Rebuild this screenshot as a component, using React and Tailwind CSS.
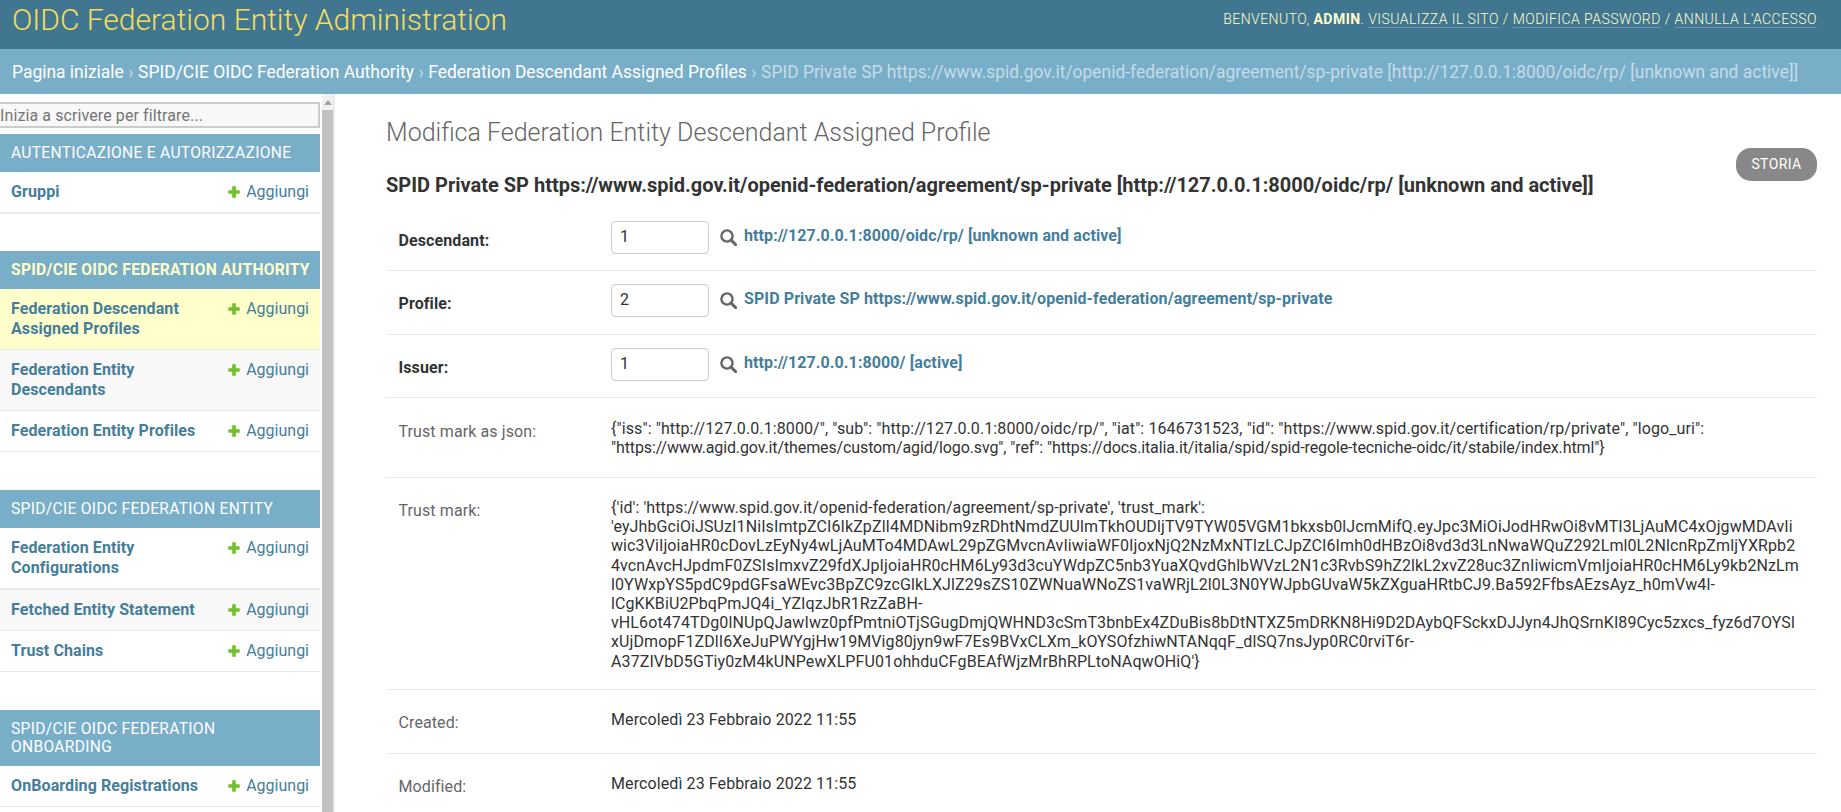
import React from "react";

const sections = [
  { title: "AUTENTICAZIONE E AUTORIZZAZIONE", mb: "mb-[37px]", rows: [{ n: ["Gruppi"], h: "h-[42px] border-b-2" }] },
  {
    title: "SPID/CIE OIDC FEDERATION AUTHORITY",
    active: true,
    mb: "mb-[38px]",
    rows: [
      { n: ["Federation Descendant", "Assigned Profiles"], h: "h-[61px] border-b", bg: "bg-[#ffffcc]" },
      { n: ["Federation Entity", "Descendants"], h: "h-[61px] border-b", bg: "bg-[#f8f8f8]" },
      { n: ["Federation Entity Profiles"], h: "h-[41px] border-b" },
    ],
  },
  {
    title: "SPID/CIE OIDC FEDERATION ENTITY",
    mb: "mb-[38px]",
    rows: [
      { n: ["Federation Entity", "Configurations"], h: "h-[62px] border-b-2" },
      { n: ["Fetched Entity Statement"], h: "h-[41px] border-b", bg: "bg-[#f8f8f8]" },
      { n: ["Trust Chains"], h: "h-[41px] border-b" },
    ],
  },
  {
    title: "SPID/CIE OIDC FEDERATION ONBOARDING",
    mb: "mb-[37px]",
    rows: [{ n: ["OnBoarding Registrations"], h: "h-[41px] border-b" }],
  },
];

const trustLines = [
  "{'id': 'https://www.spid.gov.it/openid-federation/agreement/sp-private', 'trust_mark':",
  "'eyJhbGciOiJSUzI1NiIsImtpZCI6IkZpZlI4MDNibm9zRDhtNmdZUUlmTkhOUDljTV9TYW05VGM1bkxsb0lJcmMifQ.eyJpc3MiOiJodHRwOi8vMTI3LjAuMC4xOjgwMDAvIi",
  "wic3ViIjoiaHR0cDovLzEyNy4wLjAuMTo4MDAwL29pZGMvcnAvIiwiaWF0IjoxNjQ2NzMxNTIzLCJpZCI6Imh0dHBzOi8vd3d3LnNwaWQuZ292Lml0L2NlcnRpZmljYXRpb2",
  "4vcnAvcHJpdmF0ZSIsImxvZ29fdXJpIjoiaHR0cHM6Ly93d3cuYWdpZC5nb3YuaXQvdGhlbWVzL2N1c3RvbS9hZ2lkL2xvZ28uc3ZnIiwicmVmIjoiaHR0cHM6Ly9kb2NzLm",
  "l0YWxpYS5pdC9pdGFsaWEvc3BpZC9zcGlkLXJlZ29sZS10ZWNuaWNoZS1vaWRjL2l0L3N0YWJpbGUvaW5kZXguaHRtbCJ9.Ba592FfbsAEzsAyz_h0mVw4l-",
  "lCgKKBiU2PbqPmJQ4i_YZIqzJbR1RzZaBH-",
  "vHL6ot474TDg0lNUpQJawIwz0pfPmtniOTjSGugDmjQWHND3cSmT3bnbEx4ZDuBis8bDtNTXZ5mDRKN8Hi9D2DAybQFSckxDJJyn4JhQSrnKI89Cyc5zxcs_fyz6d7OYSl",
  "xUjDmopF1ZDlI6XeJuPWYgjHw19MVig80jyn9wF7Es9BVxCLXm_kOYSOfzhiwNTANqqF_dlSQ7nsJyp0RC0rviT6r-",
  "A37ZIVbD5GTiy0zM4kUNPewXLPFU01ohhduCFgBEAfWjzMrBhRPLtoNAqwOHiQ'}",
];

const jsonLines = [
  '{"iss": "http://127.0.0.1:8000/", "sub": "http://127.0.0.1:8000/oidc/rp/", "iat": 1646731523, "id": "https://www.spid.gov.it/certification/rp/private", "logo_uri":',
  <span className="tracking-[-0.12px]">
    {'"https://www.agid.gov.it/themes/custom/agid/logo.svg", "ref": "https://docs.italia.it/italia/spid/spid-regole-tecniche-oidc/it/stabile/index.html"}'}
  </span>,
];

function Plus() {
  return (
    <svg viewBox="0 0 12 12" className="w-[12px] h-[12px] shrink-0 mt-[4px]">
      <path d="M4.2 0.3h3.6v3.9h3.9v3.6H7.8v3.9H4.2V7.8H0.3V4.2h3.9z" fill="#70bf2b" />
    </svg>
  );
}

function Search() {
  return (
    <svg viewBox="0 0 17 17" className="w-[17px] h-[17px] shrink-0 block" fill="none">
      <circle cx="7" cy="7" r="5.6" stroke="#666666" strokeWidth="2.4" />
      <path d="M11 11L15.6 15.6" stroke="#666666" strokeWidth="3" strokeLinecap="round" />
    </svg>
  );
}

function FkRow({ label, value, text, h }) {
  return (
    <div className={`flex items-center border-b border-[#eaeaea] ${h}`}>
      <div className="w-[225px] pl-[12.5px] pt-[7px] font-bold text-[#333333] shrink-0">{label}</div>
      <div className="flex items-center min-w-0">
        <div className="w-[98px] h-[33px] border border-[#cccccc] rounded-[4px] bg-white px-[8px] flex items-center text-[#333333] shrink-0">
          {value}
        </div>
        <span className="ml-[11px]"><Search /></span>
        <span className="ml-[7px] font-bold text-[#447e9b] whitespace-nowrap -mt-[3px]">{text}</span>
      </div>
    </div>
  );
}

function ReadRow({ label, lines, h, pt = "pt-[20px]" }) {
  return (
    <div className={`flex items-start border-b border-[#eaeaea] ${pt} ${h}`}>
      <div className="w-[225px] pl-[12.5px] pt-[3px] text-[#666666] shrink-0">{label}</div>
      <div className="text-[#333333] whitespace-nowrap">
        {lines.map((l, i) => (
          <div key={i}>{l}</div>
        ))}
      </div>
    </div>
  );
}

export default function App() {
  return (
    <div className="h-[812px] w-[1841px] overflow-hidden flex flex-col bg-white font-['Roboto',sans-serif] text-[16px] tracking-[0.1px] leading-[19.2px] text-[#333333]">
      <header className="h-[49px] shrink-0 bg-[#417690] flex items-center justify-between pl-[12px] pr-[24px]">
        <div className="text-[30px] tracking-normal leading-[38px] font-light text-[#f5dd5d] -mt-[9px] whitespace-nowrap">
          OIDC Federation Entity Administration
        </div>
        <div className="text-[14px] leading-[16px] font-light tracking-[0.45px] text-[#ffffcc] whitespace-nowrap -mt-[12px]">
          BENVENUTO, <strong className="font-bold">ADMIN</strong>.{" "}
          <a className="border-b border-white/25 text-[#ffffcc]">VISUALIZZA IL SITO</a> /{" "}
          <a className="border-b border-white/25 text-[#ffffcc]">MODIFICA PASSWORD</a> /{" "}
          <a className="border-b border-white/25 text-[#ffffcc]">ANNULLA L'ACCESSO</a>
        </div>
      </header>

      <nav className="h-[45px] shrink-0 bg-[#79aec8] flex items-center pl-[12px] pt-[2px] text-[17.46px] tracking-normal text-white whitespace-nowrap font-normal overflow-hidden">
        <span>Pagina iniziale</span>
        <span className="text-[#c4dce8] mx-[4.5px]">›</span>
        <span>SPID/CIE OIDC Federation Authority</span>
        <span className="text-[#c4dce8] mx-[4.5px]">›</span>
        <span>Federation Descendant Assigned Profiles</span>
        <span className="text-[#c4dce8] mx-[4.5px]">›</span>
        <span className="text-[#c4dce8]">
          SPID Private SP https://www.spid.gov.it/openid-federation/agreement/sp-private [http://127.0.0.1:8000/oidc/rp/ [unknown and active]]
        </span>
      </nav>

      <div className="flex flex-1 min-h-0">
        <aside className="w-[320px] shrink-0 overflow-hidden pt-[8px]">
          <input
            readOnly
            placeholder="Inizia a scrivere per filtrare..."
            className="block w-[320px] h-[26px] bg-[#f8f8f8] border-2 border-l-0 border-[#cccccc] pl-0 text-[16px] tracking-[0.1px] placeholder:text-[#757575] outline-none"
          />
          <div className="mt-[6px]">
            {sections.map((s, i) => (
              <section key={i} className={s.mb}>
                <div
                  className={`bg-[#79aec8] px-[11px] py-[10px] text-[15.6px] leading-[18px] tracking-[0.3px] ${
                    s.active ? "text-[#ffffcc] font-bold whitespace-nowrap" : "text-white font-normal"
                  }`}
                >
                  {s.title}
                </div>
                {s.rows.map((r, j) => (
                  <div
                    key={j}
                    className={`flex justify-between border-[#eaeaea] pl-[11px] pr-[11px] pt-[10px] leading-[20px] ${r.h} ${r.bg || "bg-white"}`}
                  >
                    <div className="font-bold text-[#447e9b] whitespace-nowrap">
                      {r.n.map((t, k) => (
                        <div key={k}>{t}</div>
                      ))}
                    </div>
                    <div className="flex items-start gap-[6px] text-[#447e9b] tracking-normal">
                      <Plus />
                      <span>Aggiungi</span>
                    </div>
                  </div>
                ))}
              </section>
            ))}
          </div>
        </aside>

        <div className="ml-[2px] w-[11px] shrink-0 bg-[#f1f1f1] flex flex-col">
          <div className="h-[16px] shrink-0 flex items-center justify-center">
            <svg viewBox="0 0 8 5" className="w-[8px] h-[5px]"><path d="M4 0l4 5H0z" fill="#a3a3a3" /></svg>
          </div>
          <div className="flex-1 bg-[#c1c1c1]" />
        </div>

        <main className="flex-1 min-w-0 border-l-2 border-[#eaeaea] pl-[51px] pr-[24px] overflow-hidden">
          <h1 className="text-[25px] tracking-normal leading-[28px] font-light text-[#666666] mt-[25px] whitespace-nowrap">
            Modifica Federation Entity Descendant Assigned Profile
          </h1>
          <div className="flex justify-between items-start mt-[27px]">
            <h2 className="text-[20px] tracking-normal leading-[22px] font-bold text-[#333333] whitespace-nowrap">
              SPID Private SP https://www.spid.gov.it/openid-federation/agreement/sp-private [http://127.0.0.1:8000/oidc/rp/ [unknown and active]]
            </h2>
            <a className="-mt-[26px] h-[33px] w-[81px] shrink-0 rounded-[15px] bg-[#888888] text-white text-[14px] tracking-[0.4px] flex items-center justify-center">
              STORIA
            </a>
          </div>
          <div>
            <FkRow label="Descendant:" value="1" text="http://127.0.0.1:8000/oidc/rp/ [unknown and active]" h="h-[75px] pt-[8px]" />
            <FkRow label="Profile:" value="2" text="SPID Private SP https://www.spid.gov.it/openid-federation/agreement/sp-private" h="h-[64px] pb-[5px]" />
            <FkRow label="Issuer:" value="1" text="http://127.0.0.1:8000/ [active]" h="h-[63px] pb-[4px]" />
            <ReadRow label="Trust mark as json:" lines={jsonLines} h="h-[80px]" pt="pt-[21px]" />
            <ReadRow label="Trust mark:" lines={trustLines} h="h-[212px]" />
            <ReadRow label="Created:" lines={["Mercoledì 23 Febbraio 2022 11:55"]} h="h-[64px]" />
            <ReadRow label="Modified:" lines={["Mercoledì 23 Febbraio 2022 11:55"]} h="h-[64px]" />
          </div>
        </main>
      </div>
    </div>
  );
}
